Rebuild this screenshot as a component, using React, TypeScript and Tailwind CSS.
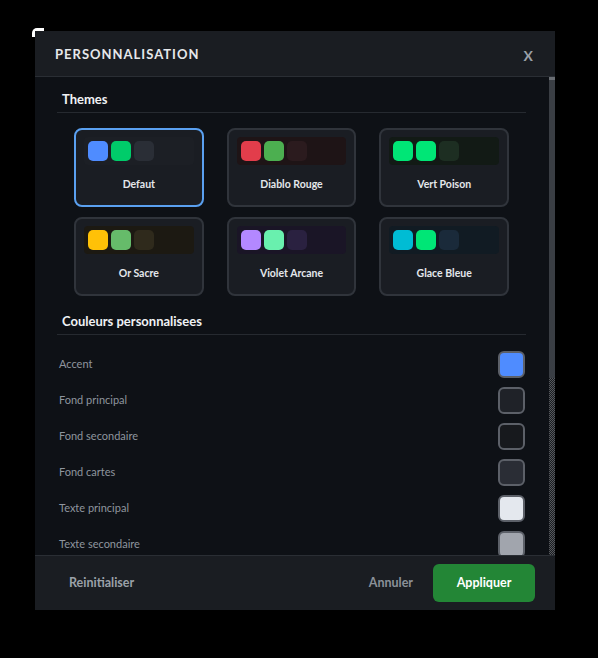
import React from "react";

const themes = [
  { name: "Defaut", c: ["#4f8cff", "#00cc6a", "#2a2e36"], strip: "#1c1f25", selected: true },
  { name: "Diablo Rouge", c: ["#e23d4b", "#4caf50", "#2b1b1e"], strip: "#1e1416" },
  { name: "Vert Poison", c: ["#00e676", "#00e676", "#1d2e22"], strip: "#121a15" },
  { name: "Or Sacre", c: ["#ffc107", "#66bb6a", "#2f2a1c"], strip: "#1c1912" },
  { name: "Violet Arcane", c: ["#b388ff", "#69f0ae", "#2a2140"], strip: "#1a1526" },
  { name: "Glace Bleue", c: ["#00bcd4", "#00e676", "#1a2a3a"], strip: "#111b23" },
];

const customs = [
  { label: "Accent", color: "#4f8cff" },
  { label: "Fond principal", color: "#1f2228" },
  { label: "Fond secondaire", color: "#17191d" },
  { label: "Fond cartes", color: "#2a2d35" },
  { label: "Texte principal", color: "#e4e8ee" },
  { label: "Texte secondaire", color: "#a1a5ad" },
];

export default function App() {
  return (
    <div
      className="relative w-[598px] h-[658px] bg-black overflow-hidden"
      style={{ fontFamily: 'Lato, "Noto Sans", sans-serif' }}
    >
      <div className="absolute left-[32px] top-[28px] w-[12px] h-[9px] bg-white rounded-tl-[5px]" />
      <div className="relative ml-[35px] pt-[31px]">
        <div className="w-[520px] h-[579px] flex flex-col bg-[#0e1116]">
          {/* Header */}
          <div className="h-[46px] shrink-0 flex items-center justify-between pl-[20px] pr-[22px] pt-[3px] bg-[#1a1d22] border-b border-[#2a2e34]">
            <span className="text-[13px] font-bold tracking-[1px] text-[#e6e8eb]">PERSONNALISATION</span>
            <span className="text-[14px] font-bold text-[#9aa0a8]">X</span>
          </div>
          {/* Body */}
          <div className="flex-1 flex min-h-0">
            <div className="flex-1 overflow-hidden pl-[22px] pr-[23px]">
              <div className="mt-[13px] px-[5px] pb-[3px] border-b border-[#262a30] text-[13px] font-bold text-[#f0f2f5] leading-[19px]">
                Themes
              </div>
              <div className="mt-[15px] mx-[17px] grid grid-cols-3 gap-x-[23px] gap-y-[10px]">
                {themes.map((t) => (
                  <div
                    key={t.name}
                    className={
                      "h-[79px] rounded-[8px] border-2 bg-[#1a1d23] pt-[7px] px-[8px] " +
                      (t.selected ? "border-[#5aa0f0]" : "border-[#30343b]")
                    }
                  >
                    <div className="h-[28px] rounded-[4px] flex items-center gap-[3px] px-[4px]" style={{ background: t.strip }}>
                      {t.c.map((c, i) => (
                        <div key={i} className="w-[20px] h-[20px] rounded-[5px]" style={{ background: c }} />
                      ))}
                    </div>
                    <div className="mt-[12px] text-center text-[10.5px] font-bold leading-[14px] text-[#e4e7eb]">
                      {t.name}
                    </div>
                  </div>
                ))}
              </div>
              <div className="mt-[16px] px-[5px] pb-[3px] border-b border-[#262a30] text-[13px] font-bold text-[#f0f2f5] leading-[19px]">
                Couleurs personnalisees
              </div>
              <div className="mt-[11px] pl-[2px] pr-[1px] flex flex-col">
                {customs.map((c) => (
                  <div key={c.label} className="h-[36px] shrink-0 flex items-center justify-between">
                    <span className="text-[11px] pt-[1px] text-[#8f959e]">{c.label}</span>
                    <div
                      className="w-[27px] h-[27px] rounded-[6px] border-2 border-[#5c6068]"
                      style={{ background: c.color }}
                    />
                  </div>
                ))}
              </div>
            </div>
            {/* Scrollbar */}
            <div className="w-[6px] shrink-0 flex flex-col bg-[#17191d]">
              <div className="h-[3px] bg-[#6a6e74]" />
              <div className="h-[298px] bg-[#3a3e44]" />
              <div
                className="flex-1"
                style={{
                  backgroundImage:
                    "repeating-conic-gradient(#55585d 0% 25%, #1a1c20 0% 50%)",
                  backgroundSize: "2px 2px",
                }}
              />
            </div>
          </div>
          {/* Footer */}
          <div className="h-[55px] shrink-0 flex items-center justify-between pl-[20px] pr-[20px] bg-[#1a1d22] border-t border-[#2a2e34]">
            <button className="px-[14px] h-[38px] text-[12.5px] font-bold text-[#9ba1a9]">Reinitialiser</button>
            <div className="flex items-center gap-[6px]">
              <button className="px-[14px] h-[38px] text-[12.5px] font-bold text-[#8b9199]">Annuler</button>
              <button className="w-[102px] h-[38px] rounded-[6px] bg-[#238636] text-[12.5px] font-bold text-white">
                Appliquer
              </button>
            </div>
          </div>
        </div>
      </div>
    </div>
  );
}
